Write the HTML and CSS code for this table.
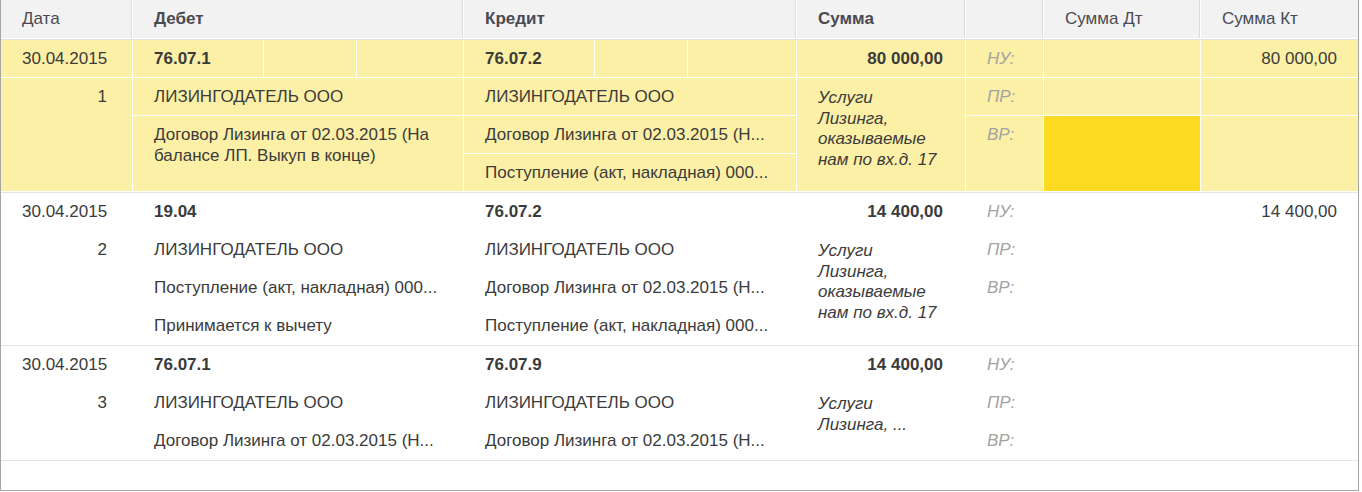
FILE: index.html
```html
<!DOCTYPE html>
<html lang="ru">
<head>
<meta charset="utf-8">
<title>Проводки</title>
<link rel="stylesheet" href="styles.css">
</head>
<body>
<div class="table">
  <div class="head grid">
    <div class="hc">Дата</div>
    <div class="hc b span3">Дебет</div>
    <div class="hc b span3">Кредит</div>
    <div class="hc b">Сумма</div>
    <div class="hc"></div>
    <div class="hc">Сумма Дт</div>
    <div class="hc">Сумма Кт</div>
  </div>

  <div class="entry grid sel rows4">
    <div class="c r">30.04.2015</div>
    <div class="c b">76.07.1</div>
    <div class="c"></div>
    <div class="c"></div>
    <div class="c b">76.07.2</div>
    <div class="c"></div>
    <div class="c"></div>
    <div class="c b r sum">80 000,00</div>
    <div class="c lbl">НУ:</div>
    <div class="c"></div>
    <div class="c r kt">80 000,00</div>

    <div class="c r num rs3">1</div>
    <div class="c span3">ЛИЗИНГОДАТЕЛЬ ООО</div>
    <div class="c span3">ЛИЗИНГОДАТЕЛЬ ООО</div>
    <div class="c it rs3">Услуги Лизинга, оказываемые нам по вх.д. 17</div>
    <div class="c lbl">ПР:</div>
    <div class="c"></div>
    <div class="c"></div>

    <div class="c span3 rs2 wrap">Договор Лизинга от 02.03.2015 (На балансе ЛП. Выкуп в конце)</div>
    <div class="c span3">Договор Лизинга от 02.03.2015 (Н...</div>
    <div class="c lbl rs2">ВР:</div>
    <div class="c gold rs2"></div>
    <div class="c rs2"></div>

    <div class="c span3">Поступление (акт, накладная) 000...</div>
  </div>

  <div class="entry grid rows4">
    <div class="c r">30.04.2015</div>
    <div class="c b span3">19.04</div>
    <div class="c b span3">76.07.2</div>
    <div class="c b r sum">14 400,00</div>
    <div class="c lbl">НУ:</div>
    <div class="c"></div>
    <div class="c r kt">14 400,00</div>

    <div class="c r num rs3">2</div>
    <div class="c span3">ЛИЗИНГОДАТЕЛЬ ООО</div>
    <div class="c span3">ЛИЗИНГОДАТЕЛЬ ООО</div>
    <div class="c it rs3">Услуги Лизинга, оказываемые нам по вх.д. 17</div>
    <div class="c lbl">ПР:</div>
    <div class="c"></div>
    <div class="c"></div>

    <div class="c span3">Поступление (акт, накладная) 000...</div>
    <div class="c span3">Договор Лизинга от 02.03.2015 (Н...</div>
    <div class="c lbl rs2">ВР:</div>
    <div class="c rs2"></div>
    <div class="c rs2"></div>

    <div class="c span3">Принимается к вычету</div>
    <div class="c span3">Поступление (акт, накладная) 000...</div>
  </div>

  <div class="entry grid rows3">
    <div class="c r">30.04.2015</div>
    <div class="c b span3">76.07.1</div>
    <div class="c b span3">76.07.9</div>
    <div class="c b r sum">14 400,00</div>
    <div class="c lbl">НУ:</div>
    <div class="c"></div>
    <div class="c"></div>

    <div class="c r num rs2">3</div>
    <div class="c span3">ЛИЗИНГОДАТЕЛЬ ООО</div>
    <div class="c span3">ЛИЗИНГОДАТЕЛЬ ООО</div>
    <div class="c it rs2">Услуги<br>Лизинга, ...</div>
    <div class="c lbl">ПР:</div>
    <div class="c"></div>
    <div class="c"></div>

    <div class="c span3">Договор Лизинга от 02.03.2015 (Н...</div>
    <div class="c span3">Договор Лизинга от 02.03.2015 (Н...</div>
    <div class="c lbl">ВР:</div>
    <div class="c"></div>
    <div class="c"></div>
  </div>

  <div class="filler"></div>
</div>
</body>
</html>
```

FILE: styles.css
```css
html, body {
  margin: 0;
  padding: 0;
  background: #ffffff;
}

body {
  font-family: "Liberation Sans", Arial, sans-serif;
  font-size: 17px;
  color: #3b3b3b;
}

.table {
  width: 1359px;
  height: 491px;
  box-sizing: border-box;
  border-left: 1px solid #a6a6a6;
  border-right: 1px solid #a6a6a6;
  border-bottom: 1px solid #a6a6a6;
  display: flex;
  flex-direction: column;
  overflow: hidden;
}

.grid {
  display: grid;
  grid-template-columns: 131px 130px 92px 106px 130px 92px 108px 168px 77px 156px 157px;
  column-gap: 1px;
  row-gap: 1px;
  background: #ffffff;
}

.head {
  height: 38px;
  border-bottom: 1px solid #e2e2e2;
  padding-bottom: 1px;
}

.hc {
  background: #f2f2f2;
  padding-left: 21px;
  line-height: 38px;
  color: #4a4a52;
  box-shadow: inset -1px 0 0 #dcdcdc;
  white-space: nowrap;
}

.hc:last-child {
  box-shadow: none;
}

.b { font-weight: bold; }

.span3 { grid-column: span 3; }
.rs2 { grid-row: span 2; }
.rs3 { grid-row: span 3; }

.rows4 { grid-template-rows: repeat(4, 37px); }
.rows3 { grid-template-rows: repeat(3, 37px); }

.entry {
  border-bottom: 1px solid #e4e4e4;
  padding-bottom: 1px;
}

.c {
  padding: 8px 21px 0 21px;
  line-height: 21px;
  white-space: nowrap;
  overflow: hidden;
}

.sel .c { background: #fcf0a6; }
.sel .c.gold { background: #fcda21; }

.r {
  text-align: right;
  padding-right: 25px;
}

.c.sum { padding-right: 22px; }
.c.kt { padding-right: 21px; }

.wrap {
  white-space: normal;
  padding-right: 8px;
}

.it {
  font-style: italic;
  white-space: normal;
  color: #3b3b3b;
  padding-top: 10px;
  line-height: 20.5px;
  padding-right: 22px;
}

.lbl {
  font-style: italic;
  color: #a3a3a3;
}

.filler {
  flex: 1;
}
```
